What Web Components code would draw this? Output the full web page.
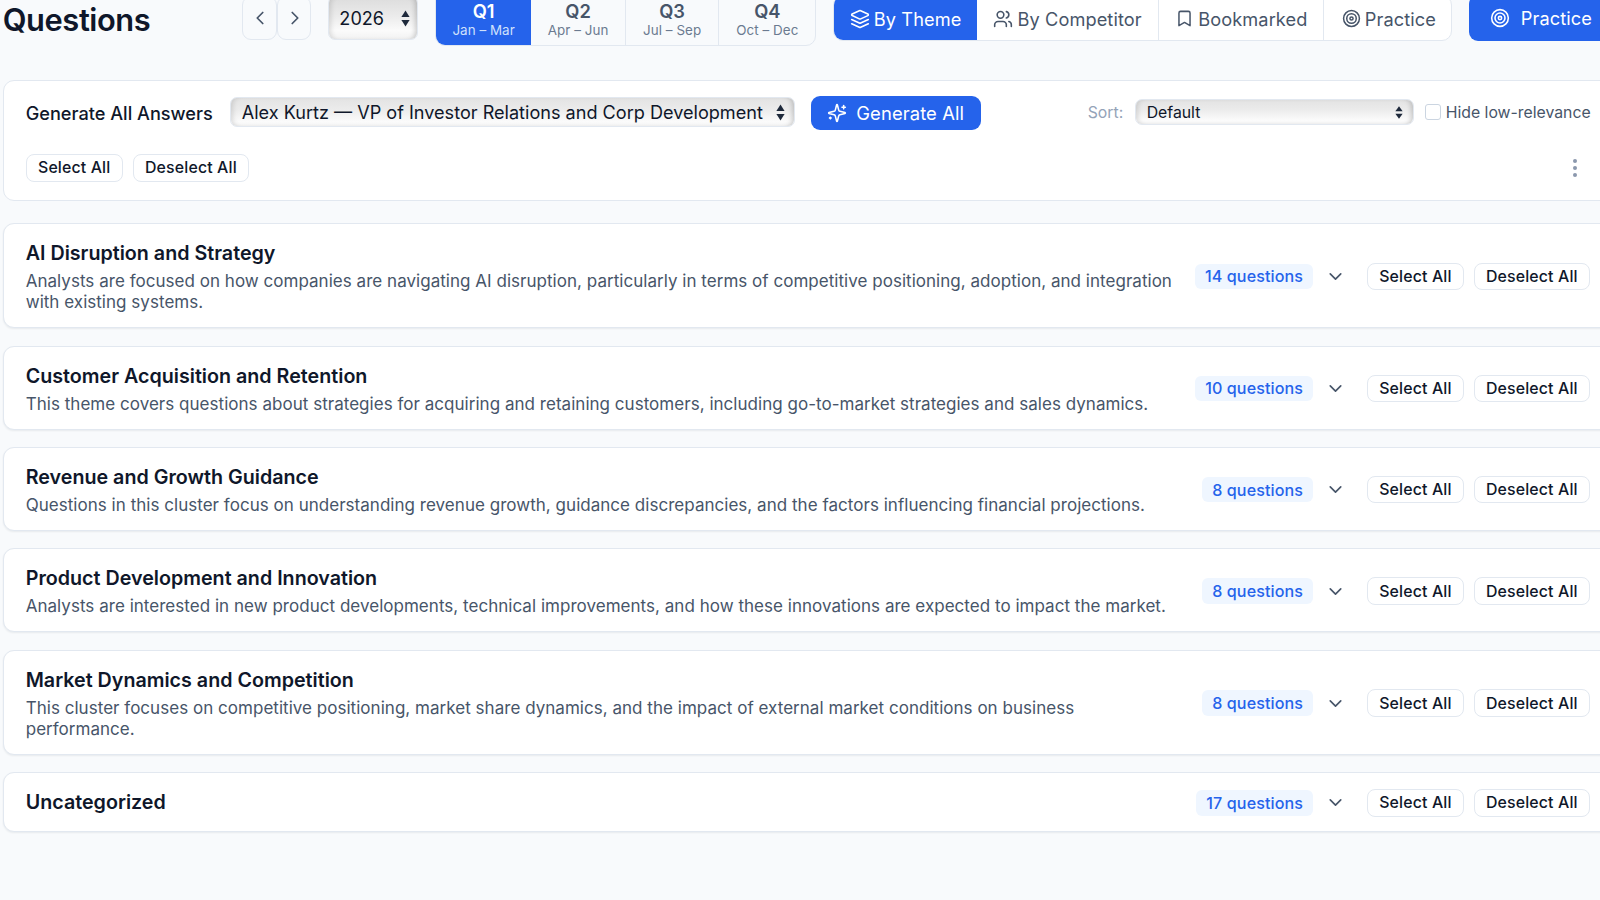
<!DOCTYPE html>
<html lang="en"><head><meta charset="utf-8"><title>Questions</title>
<style>
html,body{margin:0;padding:0;width:1600px;height:900px;overflow:hidden;background:#f8fafc;font-family:Inter,"Liberation Sans",sans-serif;color:#0f172a}
</style></head><body>
<q-app></q-app>
<script>
const ICONS={
 left:'<path d="m15 18-6-6 6-6"/>',
 right:'<path d="m9 18 6-6-6-6"/>',
 down:'<path d="m6 9 6 6 6-6"/>',
 layers:'<path d="m12.83 2.18a2 2 0 0 0-1.66 0L2.6 6.08a1 1 0 0 0 0 1.83l8.58 3.91a2 2 0 0 0 1.66 0l8.58-3.9a1 1 0 0 0 0-1.83Z"/><path d="m22 17.65-9.17 4.16a2 2 0 0 1-1.66 0L2 17.65"/><path d="m22 12.65-9.17 4.16a2 2 0 0 1-1.66 0L2 12.65"/>',
 users:'<path d="M16 21v-2a4 4 0 0 0-4-4H6a4 4 0 0 0-4 4v2"/><circle cx="9" cy="7" r="4"/><path d="M22 21v-2a4 4 0 0 0-3-3.87"/><path d="M16 3.13a4 4 0 0 1 0 7.75"/>',
 bookmark:'<path d="m19 21-7-4-7 4V5a2 2 0 0 1 2-2h10a2 2 0 0 1 2 2v16z"/>',
 target:'<circle cx="12" cy="12" r="10"/><circle cx="12" cy="12" r="6"/><circle cx="12" cy="12" r="2"/>',
 sparkles:'<path d="M9.937 15.5A2 2 0 0 0 8.5 14.063l-6.135-1.582a.5.5 0 0 1 0-.962L8.5 9.936A2 2 0 0 0 9.937 8.5l1.582-6.135a.5.5 0 0 1 .963 0L14.063 8.5A2 2 0 0 0 15.5 9.937l6.135 1.581a.5.5 0 0 1 0 .964L15.5 14.063a2 2 0 0 0-1.437 1.437l-1.582 6.135a.5.5 0 0 1-.963 0z"/><path d="M20 3v4"/><path d="M22 5h-4"/><path d="M4 17v2"/><path d="M5 18H3"/>'
};
const svg=(n,s,w=2)=>`<svg width="${s}" height="${s}" viewBox="0 0 24 24" fill="none" stroke="currentColor" stroke-width="${w}" stroke-linecap="round" stroke-linejoin="round" style="display:block;flex:none">${ICONS[n]}</svg>`;
class Base extends HTMLElement{
  constructor(){super();this.attachShadow({mode:'open'});}
  connectedCallback(){if(!this._r){this._r=1;this.shadowRoot.innerHTML=this.render();}}
}
class QIconBtn extends Base{render(){return `<style>:host{display:flex;flex:none;width:34.2px;height:44px;box-sizing:border-box;padding-left:1px;align-items:center;justify-content:center;border:1px solid #e2e8f0;border-radius:9px;background:#f8fafc;color:#475569}</style>${svg(this.getAttribute('icon'),22,1.9)}`}}
class QSelect extends Base{render(){return `<style>
:host{display:flex;flex:none;box-sizing:border-box;align-items:center;justify-content:space-between;border:1px solid #e2e8f0;border-radius:7px;color:#0f172a;white-space:nowrap;
background:linear-gradient(#e3e3e3,#ebebeb 40%,#fbfbfb 85%,#f4f4f4);box-shadow:inset 5px 0 5px -3px rgba(0,0,0,.12),inset -5px 0 5px -3px rgba(0,0,0,.18)}
svg{display:block;flex:none;width:var(--aw,9px);height:var(--ah,19px)}
</style><slot></slot><svg viewBox="0 0 9 19" preserveAspectRatio="none" fill="#1e293b"><path d="M4.5 1.5 8.6 8H.4z"/><path d="M4.5 17.5.4 11h8.2z"/></svg>`}}
class QQuarter extends Base{render(){return `<style>
:host{display:flex;flex-direction:column;align-items:center;justify-content:flex-start;box-sizing:border-box;height:100%;padding-top:8.5px;color:#475569;border-right:1px solid #e2e8f0}
:host([active]){background:#2563eb;color:#fff;border-right:0}
b{font-size:18.3px;font-weight:600;line-height:22px}
span{font-size:13.4px;line-height:17px;color:#6b7a90;letter-spacing:.05px}
:host([active]) span{color:#cfe0fb}
:host(:last-child){border-right:0}
</style><b>${this.getAttribute('q')}</b><span>${this.getAttribute('m')}</span>`}}
class QQuarters extends Base{render(){return `<style>
:host{display:grid;flex:none;grid-template-columns:94.5px 95.5px 92.5px 97px;width:381px;height:56px;box-sizing:border-box;border:1px solid #e2e8f0;border-radius:10px;overflow:hidden;background:#f8fafc}
</style><slot></slot>`}}
class QViewTab extends Base{render(){return `<style>
:host{display:flex;align-items:center;justify-content:center;gap:4px;box-sizing:border-box;height:100%;padding-top:1.5px;font-size:18.2px;color:#475569;white-space:nowrap;border-right:1px solid #e2e8f0;letter-spacing:.1px}
:host([active]){background:#2563eb;color:#fff;border-right:0}
:host(:last-child){border-right:0}
</style>${svg(this.getAttribute('icon'),this.getAttribute('size')||18,1.9)}<slot></slot>`}}
class QViews extends Base{render(){return `<style>
:host{display:grid;flex:none;grid-template-columns:142.5px 182.5px 165px 129px;width:619px;height:46px;box-sizing:border-box;border:1px solid #e2e8f0;border-radius:10px;overflow:hidden;background:#fff}
</style><slot></slot>`}}
class QPrimary extends Base{render(){return `<style>
:host{display:flex;flex:none;align-items:center;justify-content:center;gap:var(--g,10px);box-sizing:border-box;background:#2563eb;color:#fff;border-radius:9px;font-size:var(--fs,18.4px);white-space:nowrap;letter-spacing:.1px}
</style>${svg(this.getAttribute('icon'),20,1.9)}<slot></slot>`}}
class QBtn extends Base{render(){return `<style>
:host{display:flex;flex:none;align-items:center;justify-content:center;box-sizing:border-box;height:27.5px;padding:0 11.3px;border:1px solid #e2e8f0;border-radius:8px;background:#fff;font-size:15.9px;font-weight:450;color:#0f172a;white-space:nowrap;letter-spacing:.14px}
</style><slot></slot>`}}
class QHeader extends Base{render(){return `<style>
:host{display:flex;align-items:center;height:56px;margin-top:-10px}
h1{margin:0;flex:none;padding-top:4px;font-size:30.8px;font-weight:600;line-height:40px;width:239.7px;letter-spacing:-.4px;color:#0f172a}
.nav{display:flex;flex:none;gap:.6px;margin-right:17px}
q-select{width:89.5px;height:44px;padding:0 7px 0 10px;font-size:18.1px;margin-right:17.5px;background:linear-gradient(#dcdcdc,#ebebeb 45%,#fbfbfb 80%,#f2f2f2)}
q-quarters{margin-right:17px}
q-primary{width:143px;height:46px;margin-left:17px;--g:11px;--fs:18.2px}
</style><h1>Questions</h1>
<div class="nav"><q-icon-btn icon="left"></q-icon-btn><q-icon-btn icon="right"></q-icon-btn></div>
<q-select>2026</q-select>
<q-quarters><q-quarter active q="Q1" m="Jan – Mar"></q-quarter><q-quarter q="Q2" m="Apr – Jun"></q-quarter><q-quarter q="Q3" m="Jul – Sep"></q-quarter><q-quarter q="Q4" m="Oct – Dec"></q-quarter></q-quarters>
<q-views><q-view-tab active icon="layers" size="20">By Theme</q-view-tab><q-view-tab icon="users" size="20">By Competitor</q-view-tab><q-view-tab icon="bookmark" size="19">Bookmarked</q-view-tab><q-view-tab icon="target" size="19">Practice</q-view-tab></q-views>
<q-primary icon="target">Practice</q-primary>`}}
class QToolbar extends Base{render(){return `<style>
:host{display:block;box-sizing:border-box;margin:33.5px 0 22px;height:121.5px;padding:13.7px 0 0 22px;border:1px solid #e2e8f0;border-radius:11px;background:#fff}
.r1{display:flex;align-items:center;height:36px}
.lbl{flex:none;padding-top:1.5px;font-size:18.15px;font-weight:450;width:204px;white-space:nowrap}
.who{width:565px;height:30px;padding:0 9px 0 11px;font-size:18.1px;margin-right:16px}
q-primary{width:170px;height:34px;margin-top:1px;font-size:18.4px;--g:9px;margin-right:107px}
.sort{flex:none;font-size:15.8px;color:#94a3b8;width:47px}
.def{width:279px;height:26.5px;padding:0 10px 0 11px;font-size:15.8px;margin-right:11px;--aw:8px;--ah:15px}
label{display:flex;flex:none;align-items:center;gap:5px;font-size:15.8px;color:#475569;white-space:nowrap}
i{display:block;width:16px;height:16px;box-sizing:border-box;border:1px solid #cbd5e1;border-radius:3px;background:#fff}
.r2{display:flex;gap:10px;margin-top:24px;align-items:center;padding-right:34.5px}
.more{margin-left:auto;display:flex;flex-direction:column;gap:2.6px}
.more u{display:block;width:4.2px;height:4.2px;border-radius:50%;background:#8b98ad}
</style><div class="r1"><span class="lbl">Generate All Answers</span>
<q-select class="who">Alex Kurtz — VP of Investor Relations and Corp Development</q-select>
<q-primary icon="sparkles">Generate All</q-primary>
<span class="sort">Sort:</span><q-select class="def">Default</q-select>
<label><i></i>Hide low-relevance</label></div>
<div class="r2"><q-btn>Select All</q-btn><q-btn>Deselect All</q-btn><div class="more"><u></u><u></u><u></u></div></div>`}}
class QTheme extends Base{render(){const d=this.getAttribute('d');return `<style>
:host{display:flex;align-items:center;box-sizing:border-box;margin-bottom:17.3px;padding:15px 22px 13.6px;border:1px solid #e2e8f0;border-radius:11px;background:#fff;box-shadow:0 1px 2px rgba(15,23,42,.07)}
.t{flex:1;min-width:0;padding-right:22px}
h2{margin:0;font-size:19.7px;line-height:29px;font-weight:600;color:#0f172a}
p{margin:3px 0 0;font-size:17px;line-height:21.4px;color:#475569;letter-spacing:.03px}
.badge{flex:none;box-sizing:border-box;height:25.5px;padding:0 10.3px;border-radius:6px;background:#eff6ff;color:#2563eb;font-size:16.1px;font-weight:450;display:flex;align-items:center;white-space:nowrap;letter-spacing:.1px}
.chev{flex:none;width:22px;margin:0 20.5px 0 11px;color:#475569;display:flex;justify-content:center}
.acts{flex:none;display:flex;gap:9.7px}
</style><div class="t"><h2>${this.getAttribute('t')}</h2>${d?`<p>${d}</p>`:''}</div>
<span class="badge">${this.getAttribute('n')} questions</span><span class="chev">${svg('down',21,1.9)}</span>
<div class="acts"><q-btn>Select All</q-btn><q-btn>Deselect All</q-btn></div>`}}
class QApp extends Base{render(){return `<style>
:host{display:block;width:1610.3px;padding-left:2.7px;font-family:Inter,"Liberation Sans",sans-serif}
</style><q-header></q-header><q-toolbar></q-toolbar>
<q-theme t="AI Disruption and Strategy" n="14" d="Analysts are focused on how companies are navigating AI disruption, particularly in terms of competitive positioning, adoption, and integration with existing systems."></q-theme>
<q-theme t="Customer Acquisition and Retention" n="10" d="This theme covers questions about strategies for acquiring and retaining customers, including go-to-market strategies and sales dynamics."></q-theme>
<q-theme t="Revenue and Growth Guidance" n="8" d="Questions in this cluster focus on understanding revenue growth, guidance discrepancies, and the factors influencing financial projections."></q-theme>
<q-theme t="Product Development and Innovation" n="8" d="Analysts are interested in new product developments, technical improvements, and how these innovations are expected to impact the market."></q-theme>
<q-theme t="Market Dynamics and Competition" n="8" d="This cluster focuses on competitive positioning, market share dynamics, and the impact of external market conditions on business performance."></q-theme>
<q-theme t="Uncategorized" n="17" d=""></q-theme>`}}
const defs={'q-icon-btn':QIconBtn,'q-select':QSelect,'q-quarter':QQuarter,'q-quarters':QQuarters,'q-view-tab':QViewTab,'q-views':QViews,'q-primary':QPrimary,'q-btn':QBtn,'q-header':QHeader,'q-toolbar':QToolbar,'q-theme':QTheme,'q-app':QApp};
for(const k in defs)customElements.define(k,defs[k]);
</script>
</body></html>
